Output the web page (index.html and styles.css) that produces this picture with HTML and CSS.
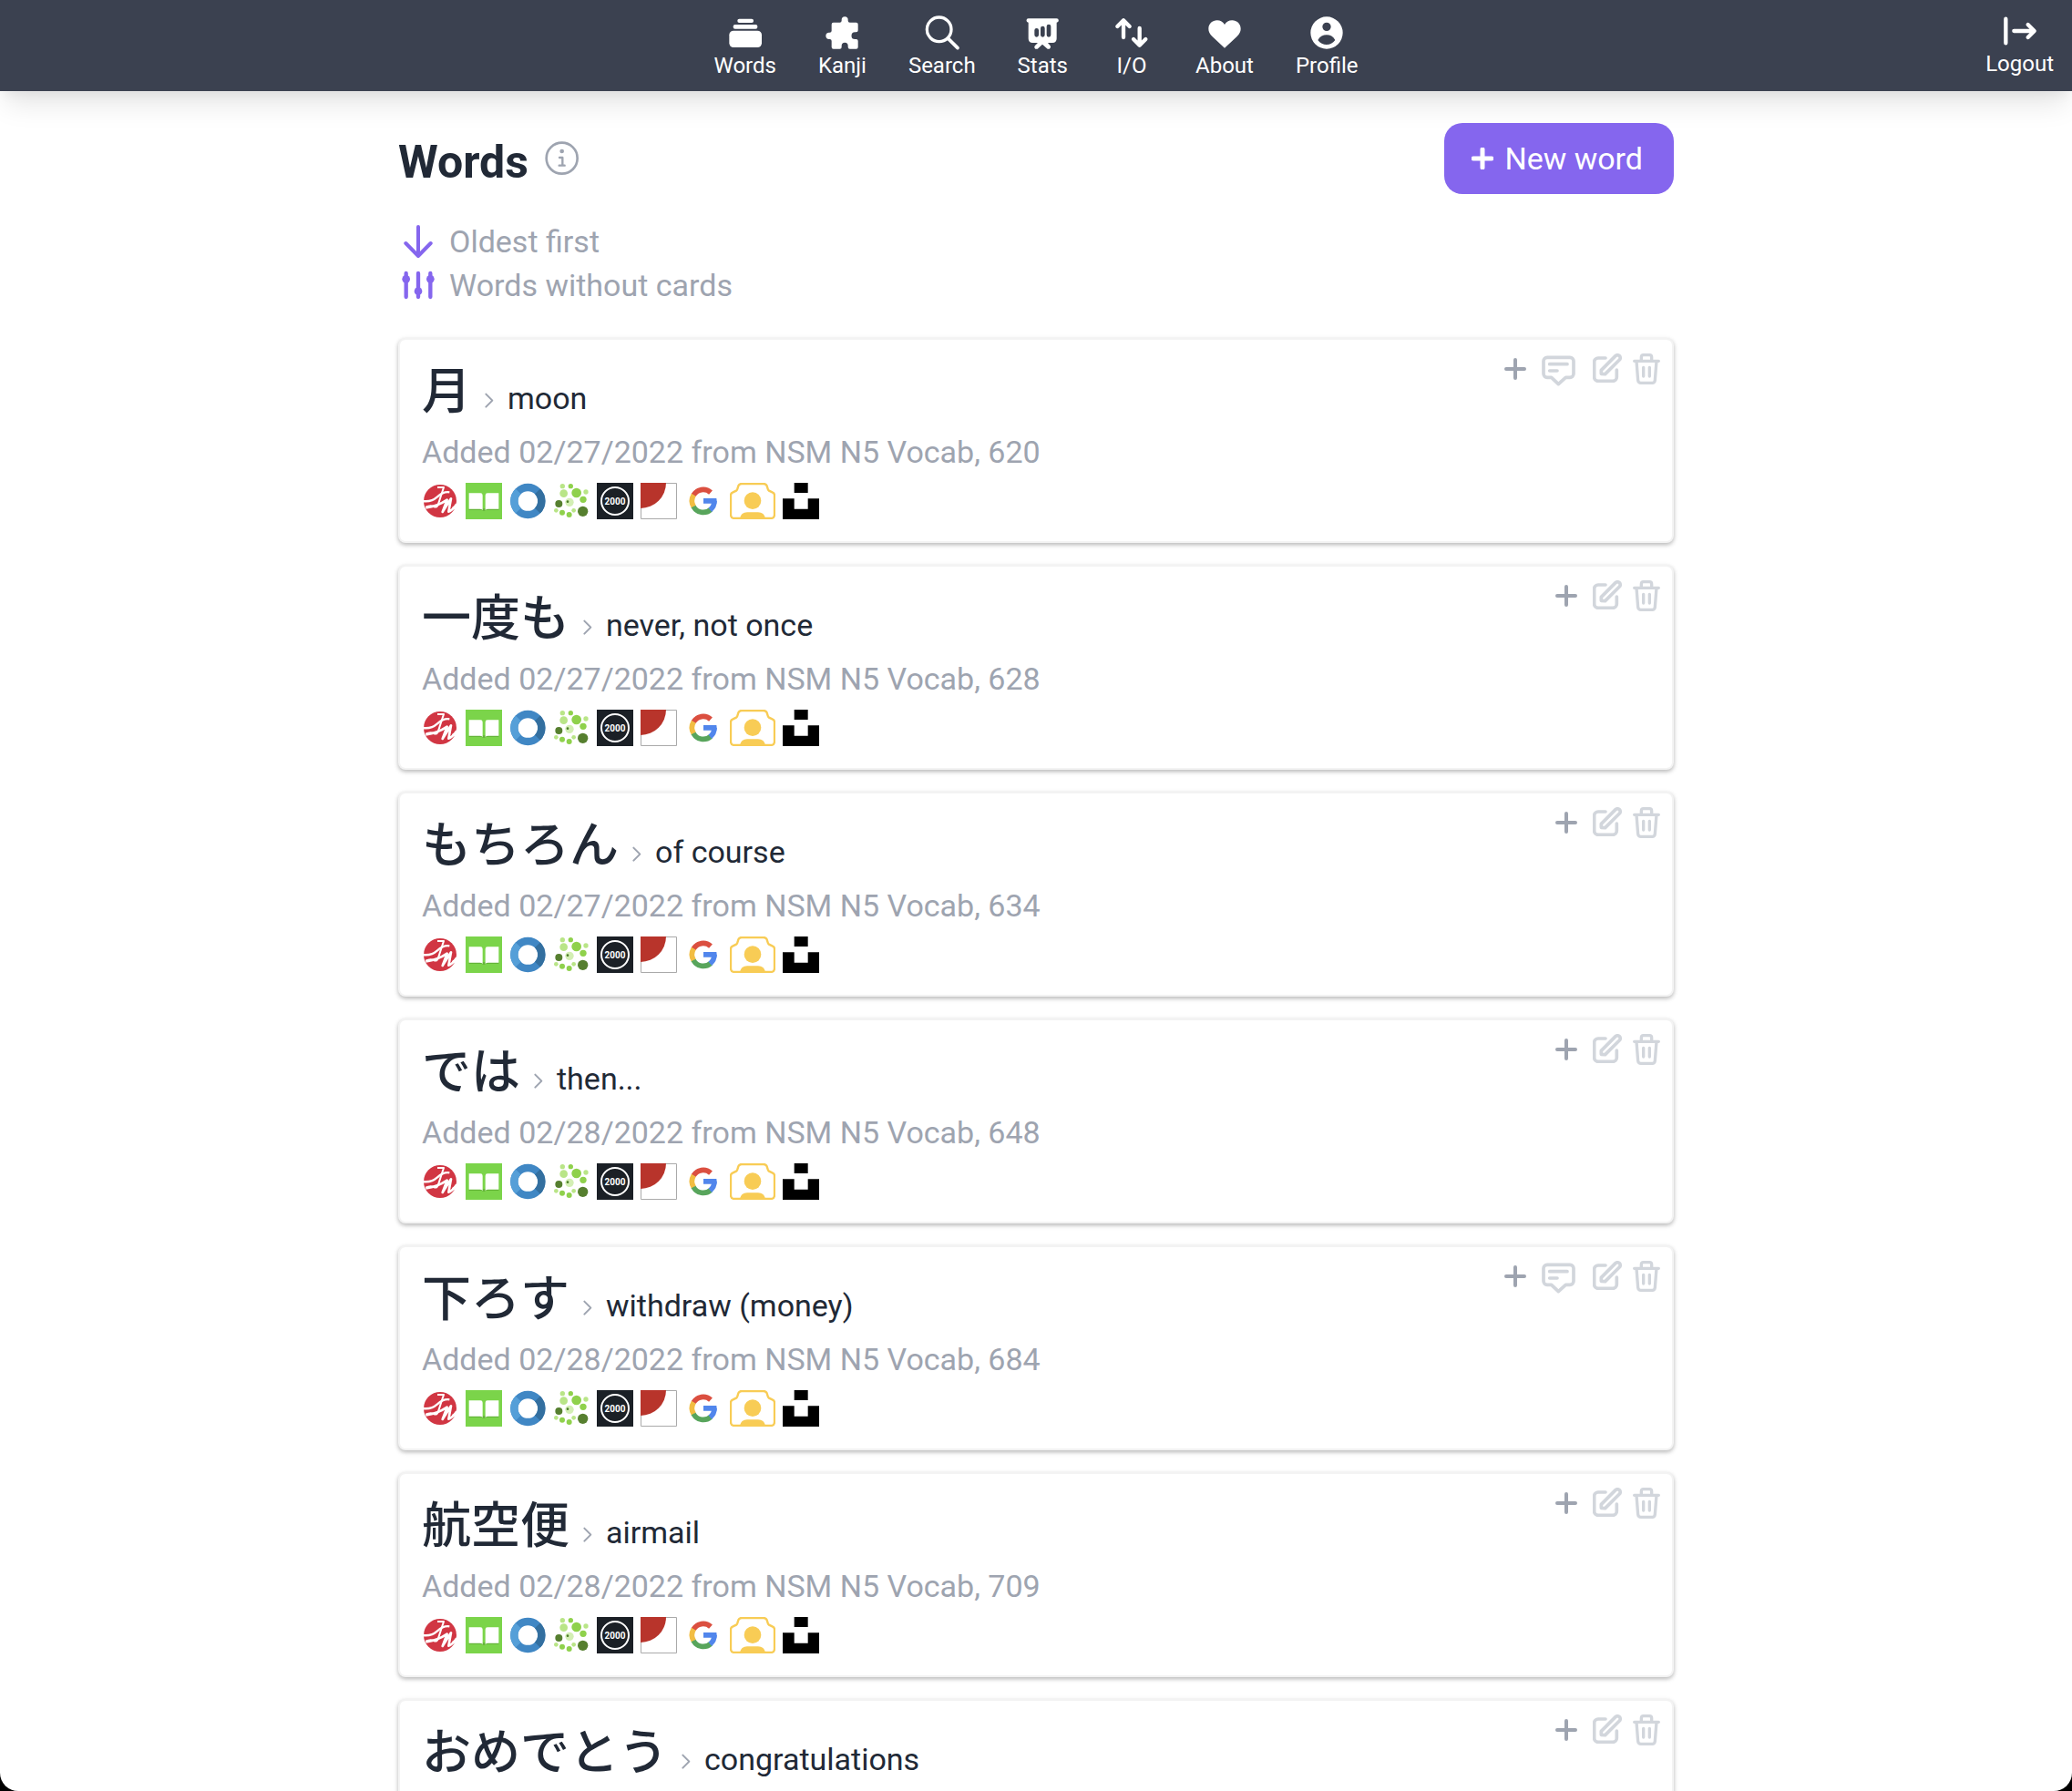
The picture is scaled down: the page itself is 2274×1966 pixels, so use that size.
FILE: index.html
```html
<!DOCTYPE html>
<html lang="en">
<head>
<meta charset="utf-8">
<meta name="viewport" content="width=device-width, initial-scale=1">
<title>Words</title>
<link rel="stylesheet" href="styles.css">
</head>
<body>
<svg class="sprite" aria-hidden="true">
  <symbol id="plus" viewBox="0 0 72 72"><path d="M36 6V66M6 36H66" fill="none" stroke="currentColor" stroke-linecap="round"/></symbol>
  <symbol id="comment" viewBox="218 90 111 102"><path d="M236 97H311A12 12 0 0 1 323 109V151A12 12 0 0 1 311 163H297L273 185L250 163H236A12 12 0 0 1 224 151V109A12 12 0 0 1 236 97ZM244 119H302M244 141H269" fill="none" stroke="currentColor" stroke-width="11" stroke-linecap="round" stroke-linejoin="round"/></symbol>
  <symbol id="edit" viewBox="384 84 96 96"><path d="M426 99H402A13 13 0 0 0 389 112V162A13 13 0 0 0 402 175H450A13 13 0 0 0 463 162V138M412 151V139L459 92A9 9 0 0 1 472 105L425 152Z" fill="none" stroke="currentColor" stroke-width="11" stroke-linecap="round" stroke-linejoin="round"/></symbol>
  <symbol id="trash" viewBox="516 84 90 102"><path d="M521 109H601M528 109L533 172Q534 181 543 181H580Q588 181 589 172L594 109M544 107V96Q544 89 551 89H571Q578 89 578 96V107M551 130V159M571 130V159" fill="none" stroke="currentColor" stroke-width="10" stroke-linecap="round" stroke-linejoin="round"/></symbol>
  <symbol id="chevron" viewBox="305 205 36 54"><path d="M312 210L333 231L312 252" fill="none" stroke="currentColor" stroke-width="6" stroke-linecap="round" stroke-linejoin="round"/></symbol>

  <symbol id="src-script" viewBox="99 510 120 120">
    <circle cx="159" cy="570" r="54" fill="#d13643"/>
    <path d="M102 570Q130 574 150 556T190 541" fill="none" stroke="#fff" stroke-width="7"/>
    <path d="M150 525H171Q162 552 153 580Q149 594 138 588T112 590" fill="none" stroke="#fff" stroke-width="6" stroke-linejoin="round"/>
    <path d="M112 592Q150 588 182 566L167 606L195 562L187 605Q198 603 214 580" fill="none" stroke="#fff" stroke-width="8" stroke-linejoin="round"/>
    <circle cx="204" cy="592" r="5" fill="#fff"/>
  </symbol>
  <symbol id="src-book" viewBox="183 45 120 120">
    <path fill="#7bd44a" d="M183 45H303V165H183Z"/>
    <path fill="#64b438" d="M194 130H292V135H249L243 139L237 135H194Z"/>
    <path fill="#fff" d="M194 79H232Q239 79 239 86V135Q236 131 230 131H194ZM292 79H255Q248 79 248 86V135Q251 131 257 131H292Z"/>
  </symbol>
  <symbol id="src-ring" viewBox="330 45 120 120">
    <g fill="none" stroke-width="25">
      <circle cx="391" cy="105" r="45" stroke="#4087c4"/>
      <path stroke="#559fd8" d="M359.200 136.800A45 45 0 0 1 359.200 73.200"/>
      <path stroke="#336f9f" d="M422.800 73.200A45 45 0 0 1 422.800 136.800"/>
    </g>
  </symbol>
  <symbol id="src-dots" viewBox="475 45 120 120">
    <g fill="#b9e587"><circle cx="506" cy="56" r="8"/><circle cx="510" cy="80" r="13"/><circle cx="583" cy="75" r="8"/><circle cx="485" cy="136" r="7"/><circle cx="543" cy="136" r="7"/></g>
    <g fill="#8fd14c"><circle cx="533" cy="56" r="8"/><circle cx="552" cy="78" r="16"/><circle cx="574" cy="100" r="11"/><circle cx="505" cy="143" r="9"/><circle cx="528" cy="150" r="9"/></g>
    <circle cx="529" cy="109" r="14" fill="#d3efb4"/><circle cx="523" cy="107" r="4" fill="#4f7f2b"/>
    <g fill="#567f2f"><circle cx="494" cy="114" r="12"/><circle cx="573" cy="139" r="17"/></g>
  </symbol>
  <symbol id="src-2000" viewBox="0 0 40 40">
    <path fill="#1b2026" d="M0 0H40V40H0Z"/><circle cx="20" cy="20" r="15" fill="none" stroke="#fff" stroke-width="2"/>
    <text x="20" y="24" text-anchor="middle" font-size="10" font-weight="700" fill="#fff">2000</text>
  </symbol>
  <symbol id="src-sun" viewBox="75 45 120 120">
    <path fill="#fff" stroke="#aaa" stroke-width="3" d="M76.500 46.500H193.500V163.500H76.500Z"/>
    <path fill="#b8342b" d="M75 45H159A84 84 0 0 1 75 129Z"/>
  </symbol>
  <symbol id="src-google" viewBox="216 45 126 120">
    <g fill="none" stroke-width="17">
      <path stroke="#db4f40" d="M246 86A37 37 0 0 1 303 77"/>
      <path stroke="#f2bd42" d="M247 124A37 37 0 0 1 247 85"/>
      <path stroke="#58a55c" d="M303 133A37 37 0 0 1 246 123"/>
      <path stroke="#5186ec" d="M315 105A37 37 0 0 1 301 134"/>
    </g>
    <path fill="#5186ec" d="M279 96H322Q324 105 322 113H279Z"/>
  </symbol>
  <symbol id="src-camera" viewBox="363 45 150 120">
    <path d="M366 149V86Q366 79 372 77L384 71Q387 69 388 65L391 55Q394 48 402 48H474Q482 48 485 55L488 65Q489 69 492 71L504 77Q510 79 510 86V149Q510 162 497 162H379Q366 162 366 149Z" fill="none" stroke="#f8cc55" stroke-width="7"/>
    <circle cx="438" cy="104" r="28" fill="#f8cc55"/>
    <path d="M395 164Q400 142 420 142H456Q476 142 481 164Z" fill="#f8cc55"/>
  </symbol>
  <symbol id="src-blocks" viewBox="540 45 120 120"><path d="M578 45H623V78H578ZM540 97H578V131H623V97H660V165H540Z"/></symbol>
</svg>

<div class="window">
  <header class="topbar">
    <nav class="nav" aria-label="Main">
      <a class="nav-item" href="#words"><svg class="nav-icon" viewBox="118 54 108 108" fill="currentColor"><rect x="146" y="62" width="53" height="13" rx="6"/><rect x="132" y="81" width="80" height="14" rx="6"/><rect x="119" y="101" width="107" height="55" rx="14"/></svg>Words</a>
      <a class="nav-item" href="#kanji"><svg class="nav-icon" viewBox="440 54 108 108" fill="currentColor"><path d="M466 74H487Q493 74 493 68V65A10.500 10.500 0 0 1 514 65V68Q514 74 520 74H541A6 6 0 0 1 547 80V100Q547 106 541 106H537A11.500 11.500 0 0 0 537 129H541Q547 129 547 135V155A6 6 0 0 1 541 161H520Q514 161 514 155V151A10.500 10.500 0 0 0 493 151V155Q493 161 487 161H466A6 6 0 0 1 460 155V135Q460 129 454 129H452A11 11 0 0 1 452 107H454Q460 107 460 101V80A6 6 0 0 1 466 74Z"/></svg>Kanji</a>
      <a class="nav-item" href="#search"><svg class="nav-icon" viewBox="769 54 108 108" fill="none" stroke="currentColor" stroke-width="10" stroke-linecap="round"><circle cx="813" cy="97" r="40"/><path stroke-width="11" d="M843 127L874 158"/></svg>Search</a>
      <a class="nav-item" href="#stats"><svg class="nav-icon" viewBox="-8 54 108 108" fill="currentColor"><path fill-rule="evenodd" d="M0 61H93A6.500 6.500 0 0 1 93 74V127Q93 141 79 141H64L71 149Q76 155 69 161H63L46 146L30 161H23Q17 156 22 150L31 141H14Q0 141 0 127V74A6.500 6.500 0 0 1 0 61ZM20 100V115A7 7 0 0 0 34 115V100A7 7 0 0 0 20 100ZM40 93V115A7 7 0 0 0 54 115V93A7 7 0 0 0 40 93ZM60 87V115A7 7 0 0 0 74 115V87A7 7 0 0 0 60 87Z"/></svg>Stats</a>
      <a class="nav-item" href="#io"><svg class="nav-icon" viewBox="284 54 108 108" fill="none" stroke="currentColor" stroke-width="13" stroke-linecap="round" stroke-linejoin="round"><path d="M311 68V123M291 87L311 67L331 87M364 93V148M344 129L364 149L384 129"/></svg>I/O</a>
      <a class="nav-item" href="#about"><svg class="nav-icon" viewBox="590 54 108 108" fill="currentColor"><path d="M644 158L604 121C594 111 591 103 591 95C591 78 604 67 619 67C630 67 639 73 644 81C649 73 658 67 669 67C684 67 697 78 697 95C697 103 694 111 684 121Z"/></svg>About</a>
      <a class="nav-item" href="#profile"><svg class="nav-icon" viewBox="926 54 108 108" fill="currentColor"><path fill-rule="evenodd" d="M980 55A53 53 0 0 1 980 161A53 53 0 0 1 980 55ZM980 74A14 14 0 0 0 980 102A14 14 0 0 0 980 74ZM951 132C958 120 968 115 980 115S1001 120 1008 132C1000 142 991 147 980 147S958 142 951 132Z"/></svg>Profile</a>
    </nav>
    <a class="nav-item logout" href="#logout"><svg class="nav-icon" viewBox="312 48 108 108" fill="none" stroke="currentColor" stroke-width="13" stroke-linecap="round" stroke-linejoin="round"><path d="M319 62V142M346 102H412M392 81L413 102L392 123"/></svg>Logout</a>
  </header>

  <main class="page">
    <div class="page-head">
      <h1 class="title">Words</h1>
      <button class="info" type="button" aria-label="About this list"><svg class="info-icon" viewBox="532 103 111 111" fill="none" stroke="currentColor" stroke-linecap="round" stroke-linejoin="round"><circle cx="588" cy="159" r="51" stroke-width="8"/><path stroke-width="7" d="M580 157H590V183M579 183H597"/><circle cx="588" cy="136" r="7" fill="currentColor" stroke="none"/></svg></button>
      <button class="new-word" type="button"><svg class="new-icon" aria-hidden="true"><use href="#plus"/></svg>New word</button>
    </div>

    <div class="filters">
      <button class="filter" type="button"><svg class="filter-icon" viewBox="60 378 114 114" fill="none" stroke="currentColor" stroke-width="12" stroke-linecap="round" stroke-linejoin="round"><path d="M117 387V482M76 441L117 483L158 441"/></svg>Oldest first</button>
      <button class="filter" type="button"><svg class="filter-icon" viewBox="60 522 114 114" fill="currentColor" stroke="currentColor" stroke-width="13" stroke-linecap="round"><path d="M77 540V618M117 540V618M157 540V618"/><g stroke="none"><circle cx="77" cy="559" r="13"/><circle cx="117" cy="599" r="13"/><circle cx="157" cy="559" r="13"/></g></svg>Words without cards</button>
    </div>

    <div class="cards">
      <article class="card">
        <h2 class="word"><span class="term" lang="ja">月</span><svg class="chevron" aria-hidden="true"><use href="#chevron"/></svg><span class="meaning">moon</span></h2>
        <p class="added">Added 02/27/2022 from NSM N5 Vocab, 620</p>
        <div class="links"><a href="#a"><svg><use href="#src-script"/></svg></a><a href="#b"><svg><use href="#src-book"/></svg></a><a href="#c"><svg><use href="#src-ring"/></svg></a><a href="#d"><svg><use href="#src-dots"/></svg></a><a href="#e"><svg><use href="#src-2000"/></svg></a><a href="#f"><svg><use href="#src-sun"/></svg></a><a class="mid" href="#g"><svg><use href="#src-google"/></svg></a><a class="wide" href="#h"><svg><use href="#src-camera"/></svg></a><a href="#i"><svg><use href="#src-blocks"/></svg></a></div>
        <div class="actions"><button class="add" type="button" aria-label="Add card"><svg><use href="#plus"/></svg></button><button class="note" type="button" aria-label="Comment"><svg><use href="#comment"/></svg></button><button class="edit" type="button" aria-label="Edit"><svg><use href="#edit"/></svg></button><button class="delete" type="button" aria-label="Delete"><svg><use href="#trash"/></svg></button></div>
      </article>
      <article class="card">
        <h2 class="word"><span class="term" lang="ja">一度も</span><svg class="chevron" aria-hidden="true"><use href="#chevron"/></svg><span class="meaning">never, not once</span></h2>
        <p class="added">Added 02/27/2022 from NSM N5 Vocab, 628</p>
        <div class="links"><a href="#a"><svg><use href="#src-script"/></svg></a><a href="#b"><svg><use href="#src-book"/></svg></a><a href="#c"><svg><use href="#src-ring"/></svg></a><a href="#d"><svg><use href="#src-dots"/></svg></a><a href="#e"><svg><use href="#src-2000"/></svg></a><a href="#f"><svg><use href="#src-sun"/></svg></a><a class="mid" href="#g"><svg><use href="#src-google"/></svg></a><a class="wide" href="#h"><svg><use href="#src-camera"/></svg></a><a href="#i"><svg><use href="#src-blocks"/></svg></a></div>
        <div class="actions"><button class="add" type="button" aria-label="Add card"><svg><use href="#plus"/></svg></button><button class="edit" type="button" aria-label="Edit"><svg><use href="#edit"/></svg></button><button class="delete" type="button" aria-label="Delete"><svg><use href="#trash"/></svg></button></div>
      </article>
      <article class="card">
        <h2 class="word"><span class="term" lang="ja">もちろん</span><svg class="chevron" aria-hidden="true"><use href="#chevron"/></svg><span class="meaning">of course</span></h2>
        <p class="added">Added 02/27/2022 from NSM N5 Vocab, 634</p>
        <div class="links"><a href="#a"><svg><use href="#src-script"/></svg></a><a href="#b"><svg><use href="#src-book"/></svg></a><a href="#c"><svg><use href="#src-ring"/></svg></a><a href="#d"><svg><use href="#src-dots"/></svg></a><a href="#e"><svg><use href="#src-2000"/></svg></a><a href="#f"><svg><use href="#src-sun"/></svg></a><a class="mid" href="#g"><svg><use href="#src-google"/></svg></a><a class="wide" href="#h"><svg><use href="#src-camera"/></svg></a><a href="#i"><svg><use href="#src-blocks"/></svg></a></div>
        <div class="actions"><button class="add" type="button" aria-label="Add card"><svg><use href="#plus"/></svg></button><button class="edit" type="button" aria-label="Edit"><svg><use href="#edit"/></svg></button><button class="delete" type="button" aria-label="Delete"><svg><use href="#trash"/></svg></button></div>
      </article>
      <article class="card">
        <h2 class="word"><span class="term" lang="ja">では</span><svg class="chevron" aria-hidden="true"><use href="#chevron"/></svg><span class="meaning">then...</span></h2>
        <p class="added">Added 02/28/2022 from NSM N5 Vocab, 648</p>
        <div class="links"><a href="#a"><svg><use href="#src-script"/></svg></a><a href="#b"><svg><use href="#src-book"/></svg></a><a href="#c"><svg><use href="#src-ring"/></svg></a><a href="#d"><svg><use href="#src-dots"/></svg></a><a href="#e"><svg><use href="#src-2000"/></svg></a><a href="#f"><svg><use href="#src-sun"/></svg></a><a class="mid" href="#g"><svg><use href="#src-google"/></svg></a><a class="wide" href="#h"><svg><use href="#src-camera"/></svg></a><a href="#i"><svg><use href="#src-blocks"/></svg></a></div>
        <div class="actions"><button class="add" type="button" aria-label="Add card"><svg><use href="#plus"/></svg></button><button class="edit" type="button" aria-label="Edit"><svg><use href="#edit"/></svg></button><button class="delete" type="button" aria-label="Delete"><svg><use href="#trash"/></svg></button></div>
      </article>
      <article class="card">
        <h2 class="word"><span class="term" lang="ja">下ろす</span><svg class="chevron" aria-hidden="true"><use href="#chevron"/></svg><span class="meaning">withdraw (money)</span></h2>
        <p class="added">Added 02/28/2022 from NSM N5 Vocab, 684</p>
        <div class="links"><a href="#a"><svg><use href="#src-script"/></svg></a><a href="#b"><svg><use href="#src-book"/></svg></a><a href="#c"><svg><use href="#src-ring"/></svg></a><a href="#d"><svg><use href="#src-dots"/></svg></a><a href="#e"><svg><use href="#src-2000"/></svg></a><a href="#f"><svg><use href="#src-sun"/></svg></a><a class="mid" href="#g"><svg><use href="#src-google"/></svg></a><a class="wide" href="#h"><svg><use href="#src-camera"/></svg></a><a href="#i"><svg><use href="#src-blocks"/></svg></a></div>
        <div class="actions"><button class="add" type="button" aria-label="Add card"><svg><use href="#plus"/></svg></button><button class="note" type="button" aria-label="Comment"><svg><use href="#comment"/></svg></button><button class="edit" type="button" aria-label="Edit"><svg><use href="#edit"/></svg></button><button class="delete" type="button" aria-label="Delete"><svg><use href="#trash"/></svg></button></div>
      </article>
      <article class="card">
        <h2 class="word"><span class="term" lang="ja">航空便</span><svg class="chevron" aria-hidden="true"><use href="#chevron"/></svg><span class="meaning">airmail</span></h2>
        <p class="added">Added 02/28/2022 from NSM N5 Vocab, 709</p>
        <div class="links"><a href="#a"><svg><use href="#src-script"/></svg></a><a href="#b"><svg><use href="#src-book"/></svg></a><a href="#c"><svg><use href="#src-ring"/></svg></a><a href="#d"><svg><use href="#src-dots"/></svg></a><a href="#e"><svg><use href="#src-2000"/></svg></a><a href="#f"><svg><use href="#src-sun"/></svg></a><a class="mid" href="#g"><svg><use href="#src-google"/></svg></a><a class="wide" href="#h"><svg><use href="#src-camera"/></svg></a><a href="#i"><svg><use href="#src-blocks"/></svg></a></div>
        <div class="actions"><button class="add" type="button" aria-label="Add card"><svg><use href="#plus"/></svg></button><button class="edit" type="button" aria-label="Edit"><svg><use href="#edit"/></svg></button><button class="delete" type="button" aria-label="Delete"><svg><use href="#trash"/></svg></button></div>
      </article>
      <article class="card last">
        <h2 class="word"><span class="term" lang="ja">おめでとう</span><svg class="chevron" aria-hidden="true"><use href="#chevron"/></svg><span class="meaning">congratulations</span></h2>
        <div class="actions"><button class="add" type="button" aria-label="Add card"><svg><use href="#plus"/></svg></button><button class="edit" type="button" aria-label="Edit"><svg><use href="#edit"/></svg></button><button class="delete" type="button" aria-label="Delete"><svg><use href="#trash"/></svg></button></div>
      </article>
    </div>
  </main>
</div>
</body>
</html>
```
FILE: styles.css
```css
* { box-sizing: border-box; }

html { background: #000; }

body {
  margin: 0;
  font-family: Roboto, "Noto Sans CJK JP", sans-serif;
  font-size: 34px;
  line-height: 48px;
  color: #212936;
}

a { color: inherit; text-decoration: none; }
h1, h2, p { margin: 0; font-weight: 400; }
svg { display: block; overflow: visible; }

button {
  margin: 0;
  padding: 0;
  border: 0;
  background: none;
  color: inherit;
  font: inherit;
  cursor: pointer;
}

.sprite { position: absolute; width: 0; height: 0; }

.window {
  height: 100vh;
  overflow: hidden;
  background: #fff;
  border-radius: 0 0 20px 20px;
}

/* Top navigation */
.topbar {
  display: grid;
  grid-template-columns: 1fr auto 1fr;
  align-items: start;
  height: 100px;
  padding: 0 20px;
  background: #3b4150;
  color: #fff;
  box-shadow: 0 20px 30px -6px rgba(0, 0, 0, 0.1), 0 8px 12px -4px rgba(0, 0, 0, 0.05);
}

.nav {
  grid-column: 2;
  display: flex;
  gap: 46px;
  padding-top: 18px;
}

.nav-item {
  display: flex;
  flex-direction: column;
  align-items: center;
  gap: 4px;
  min-width: 48px;
  font-size: 24px;
  line-height: 28px;
}

.nav-icon { width: 36px; height: 36px; }

.logout {
  grid-column: 3;
  justify-self: end;
  padding-top: 16px;
}

/* Page */
.page {
  max-width: 1400px;
  margin: 0 auto;
  padding-top: 35px;
}

.page-head {
  display: flex;
  align-items: flex-start;
  gap: 18px;
  height: 78px;
}

.title {
  font-size: 50px;
  line-height: 86px;
  font-weight: 700;
}

.info {
  margin-top: 20px;
  color: #9ea4b0;
}

.info-icon { width: 37px; height: 37px; }

.new-word {
  display: flex;
  align-items: center;
  gap: 12px;
  height: 78px;
  margin-left: auto;
  padding: 0 34px 0 30px;
  border-radius: 20px;
  background: #8566ee;
  color: #fff;
}

.new-icon { width: 24px; height: 24px; stroke-width: 15; }

.filters {
  display: flex;
  flex-direction: column;
  align-items: flex-start;
  margin-top: 28px;
  color: #9ea4b0;
}

.filter {
  display: flex;
  align-items: center;
  gap: 15px;
  padding-left: 3px;
}

.filter-icon { width: 38px; height: 38px; color: #8566ee; }

/* Word cards */
.cards {
  display: flex;
  flex-direction: column;
  gap: 24px;
  margin-top: 34px;
}

.card {
  position: relative;
  display: flex;
  flex-direction: column;
  gap: 10px;
  padding: 22px 24px 24px;
  border: 2px solid #f3f3f3;
  border-radius: 8px;
  background: #fff;
  box-shadow: 0 2px 6px rgba(0, 0, 0, 0.1), 0 2px 4px rgba(0, 0, 0, 0.2);
}

.card.last { min-height: 225px; }

.word {
  display: flex;
  align-items: baseline;
  height: 67px;
  font-size: 34px;
}

.term {
  font-size: 54px;
  line-height: 72px;
  font-weight: 500;
}

.chevron {
  width: 12px;
  height: 18px;
  margin: 0 14px 3px;
  color: #9ea4b0;
}

.added { color: #9ea4b0; }

.links { display: flex; gap: 8px; }
.links svg { width: 40px; height: 40px; }
.links .mid svg { width: 42px; }
.links .wide svg { width: 50px; }

.actions {
  position: absolute;
  top: 15px;
  right: 13px;
  display: flex;
  align-items: flex-start;
  color: #d2d6dc;
}

.actions svg { width: 100%; height: 100%; }
.add { width: 24px; height: 24px; margin: 5px 17px 0 0; color: #9ea4b0; stroke-width: 12; }
.note { width: 37px; height: 34px; margin: 2px 19px 0 0; }
.edit { width: 32px; height: 32px; margin-right: 12px; }
.delete { width: 30px; height: 34px; }
```
